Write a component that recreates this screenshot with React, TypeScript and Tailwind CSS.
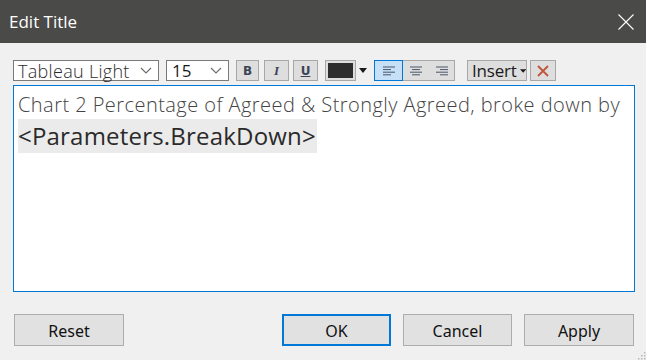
function Chevron() {
  return (
    <svg width="12" height="7" viewBox="0 0 12 7" className="shrink-0">
      <path d="M1 1l5 5 5-5" fill="none" stroke="#6d6d6d" strokeWidth="1.2" />
    </svg>
  );
}

function AlignIcon({ kind }: { kind: "left" | "center" | "right" }) {
  const rows =
    kind === "left"
      ? [[0, 12], [0, 8], [0, 12], [0, 8]]
      : kind === "center"
      ? [[0, 12], [2, 10], [0, 12], [2, 10]]
      : [[0, 12], [4, 12], [0, 12], [4, 12]];
  return (
    <svg width="12" height="10" viewBox="0 0 12 10">
      {rows.map(([a, b], i) => (
        <line key={i} x1={a} x2={b} y1={1 + i * 2.6} y2={1 + i * 2.6} stroke="#4a5568" strokeWidth="1" />
      ))}
    </svg>
  );
}

export default function App() {
  return (
    <div className="w-[646px] h-[360px] bg-[#f0f0f0] flex flex-col overflow-hidden relative font-['Open_Sans',sans-serif]">
      {/* Title bar */}
      <div className="h-[43px] bg-[#4a4a48] flex items-center justify-between pl-[9px] pr-[12px] shrink-0">
        <span className="text-white text-[17px] leading-none">Edit Title</span>
        <svg width="16" height="16" viewBox="0 0 16 16">
          <path d="M0.5 0.5l15 15M15.5 0.5l-15 15" stroke="#ffffff" strokeWidth="1.1" />
        </svg>
      </div>

      {/* Toolbar */}
      <div className="flex items-center h-[21px] mt-[17px] ml-[13px]">
        <div className="w-[146px] h-full bg-white border border-[#7a7a7a] flex items-center justify-between pl-[4px] pr-[6px]">
          <span className="text-[18px] font-light text-[#2b2b2b] leading-none tracking-[0.3px]">Tableau Light</span>
          <Chevron />
        </div>
        <div className="w-[63px] h-full ml-[7px] bg-white border border-[#7a7a7a] flex items-center justify-between pl-[5px] pr-[6px]">
          <span className="text-[17px] text-[#1a1a1a] leading-none">15</span>
          <Chevron />
        </div>
        <div className="w-[23px] h-full ml-[7px] bg-[#dedede] border border-[#a8a8a8] flex items-center justify-center text-[12px] font-bold text-[#3b4455] font-['DejaVu_Sans',sans-serif]">
          B
        </div>
        <div className="w-[25px] h-full ml-[5px] bg-[#dedede] border border-[#a8a8a8] flex items-center justify-center text-[13px] font-bold italic text-[#3b4455] font-['Liberation_Serif',serif]">
          I
        </div>
        <div className="w-[25px] h-full ml-[4px] bg-[#dedede] border border-[#a8a8a8] flex items-center justify-center text-[12px] font-bold underline text-[#3b4455] font-['DejaVu_Sans',sans-serif]">
          U
        </div>
        <div className="ml-[7px] h-full flex items-center">
          <div className="w-[31px] h-full bg-[#dedede] border border-[#a8a8a8] p-[2px]">
            <div className="w-full h-full bg-[#2d2d2d]" />
          </div>
          <svg width="8" height="5" viewBox="0 0 8 5" className="ml-[3px]">
            <path d="M0 0h8L4 5z" fill="#1a1a1a" />
          </svg>
        </div>
        <div className="ml-[7px] h-full w-[81px] flex border border-[#a8a8a8] bg-[#dedede]">
          <div className="w-[27px] h-full bg-[#c5e0f7] outline outline-1 outline-[#0078d7] flex items-center justify-center">
            <AlignIcon kind="left" />
          </div>
          <div className="w-[27px] h-full flex items-center justify-center">
            <AlignIcon kind="center" />
          </div>
          <div className="flex-1 h-full flex items-center justify-center">
            <AlignIcon kind="right" />
          </div>
        </div>
        <div className="ml-[12px] w-[60px] h-full bg-[#dedede] border border-[#a8a8a8] flex items-center pl-[4px] gap-[3px]">
          <span className="text-[17px] text-[#1a1a1a] leading-none tracking-[-0.2px]">Insert</span>
          <svg width="7" height="4" viewBox="0 0 7 4">
            <path d="M0 0h7L3.5 4z" fill="#1a1a1a" />
          </svg>
        </div>
        <div className="ml-[3px] w-[26px] h-full bg-[#dedede] border border-[#a8a8a8] flex items-center justify-center">
          <svg width="12" height="12" viewBox="0 0 12 12">
            <path d="M1 1l10 10M11 1L1 11" stroke="#c0553a" strokeWidth="1.8" />
          </svg>
        </div>
      </div>

      {/* Text area */}
      <div className="mt-[4px] ml-[13px] w-[622px] h-[207px] bg-white border border-[#0078d7] pl-[4px] pt-[5px]">
        <div className="text-[20px] font-light text-[#444444] leading-[27px] tracking-[0.45px]">
          Chart 2 Percentage of Agreed &amp; Strongly Agreed, broke down by
        </div>
        <div className="mt-[1px]">
          <span className="inline-block bg-[#ebebeb] text-[24px] text-[#2a2a2a] leading-[34px] pr-[1px] tracking-[0.2px]">
            &lt;Parameters.BreakDown&gt;
          </span>
        </div>
      </div>

      {/* Bottom buttons */}
      <div className="flex items-center mt-[22px] ml-[14px] h-[32px] font-['Noto_Sans',sans-serif]">
        <div className="w-[110px] h-full bg-[#e1e1e1] border border-[#adadad] flex items-center justify-center text-[16px] text-[#111] pt-[1px]">
          Reset
        </div>
        <div className="ml-[158px] w-[109px] h-full bg-[#e1e1e1] border-2 border-[#0078d7] flex items-center justify-center text-[16px] text-[#111] pt-[1px]">
          OK
        </div>
        <div className="ml-[12px] w-[109px] h-full bg-[#e1e1e1] border border-[#adadad] flex items-center justify-center text-[16px] text-[#111] pt-[1px]">
          Cancel
        </div>
        <div className="ml-[12px] w-[110px] h-full bg-[#e1e1e1] border border-[#adadad] flex items-center justify-center text-[16px] text-[#111] pt-[1px]">
          Apply
        </div>
      </div>

      {/* Resize grip */}
      <svg width="10" height="10" viewBox="0 0 10 10" className="absolute right-0 bottom-0">
        {[[8, 2], [5, 5], [8, 5], [2, 8], [5, 8], [8, 8]].map(([x, y], i) => (
          <rect key={i} x={x} y={y} width="1.5" height="1.5" fill="#b8b8b8" />
        ))}
      </svg>
    </div>
  );
}
